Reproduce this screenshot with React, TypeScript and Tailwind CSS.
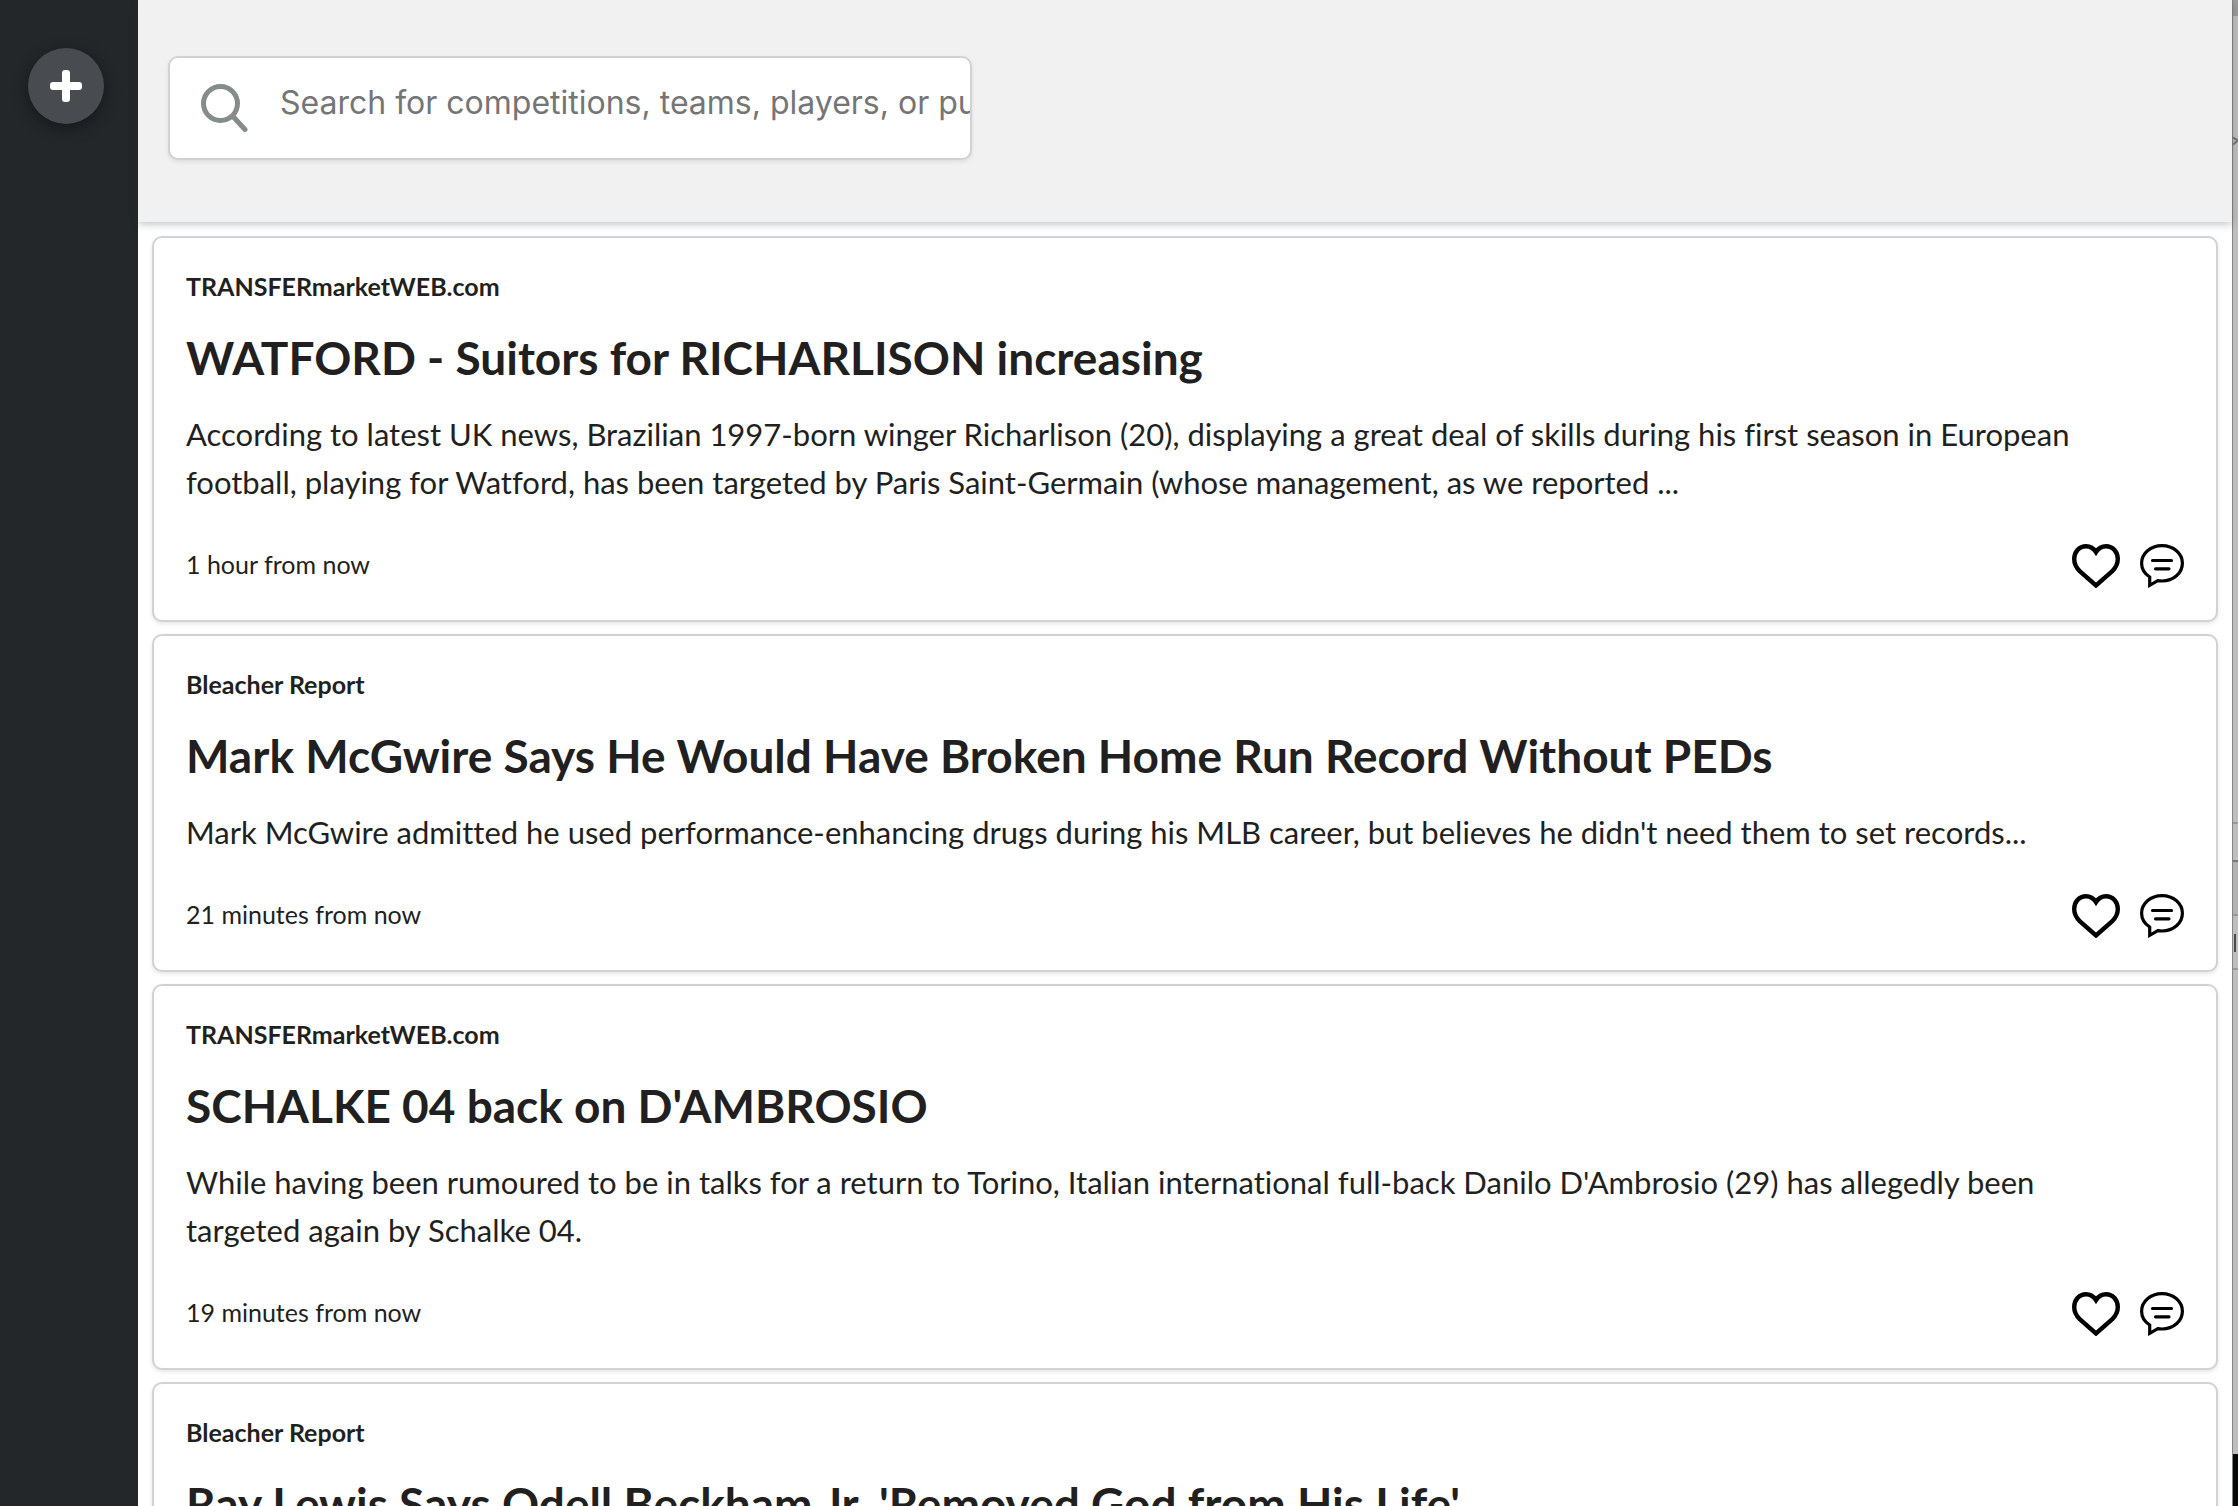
type Article = { source: string; title: string; summary: string; time: string };

const articles: Article[] = [
  {
    source: "TRANSFERmarketWEB.com",
    title: "WATFORD - Suitors for RICHARLISON increasing",
    summary:
      "According to latest UK news, Brazilian 1997-born winger Richarlison (20), displaying a great deal of skills during his first season in European football, playing for Watford, has been targeted by Paris Saint-Germain (whose management, as we reported ...",
    time: "1 hour from now",
  },
  {
    source: "Bleacher Report",
    title: "Mark McGwire Says He Would Have Broken Home Run Record Without PEDs",
    summary:
      "Mark McGwire admitted he used performance-enhancing drugs during his MLB career, but believes he didn't need them to set records...",
    time: "21 minutes from now",
  },
  {
    source: "TRANSFERmarketWEB.com",
    title: "SCHALKE 04 back on D'AMBROSIO",
    summary:
      "While having been rumoured to be in talks for a return to Torino, Italian international full-back Danilo D'Ambrosio (29) has allegedly been targeted again by Schalke 04.",
    time: "19 minutes from now",
  },
  {
    source: "Bleacher Report",
    title: "Ray Lewis Says Odell Beckham Jr. 'Removed God from His Life'",
    summary: "",
    time: "",
  },
];

function PlusIcon() {
  return (
    <svg viewBox="0 0 32 32" className="size-8" fill="#ffffff" aria-hidden="true">
      <rect x="12" y="0" width="8" height="32" rx="3" />
      <rect x="0" y="12" width="32" height="8" rx="3" />
    </svg>
  );
}

function SearchIcon() {
  return (
    <svg viewBox="0 0 48 48" className="size-12 shrink-0" fill="none" stroke="#868c8c" strokeWidth="5" strokeLinecap="round" aria-hidden="true">
      <circle cx="20.5" cy="19.5" r="17" />
      <path d="M33 32.500L45 45.500" />
    </svg>
  );
}

function HeartIcon() {
  return (
    <svg viewBox="0 0 48 44" className="h-11 w-12" fill="none" stroke="#000000" strokeWidth="4.4" aria-hidden="true">
      <path d="M24 8C21.500 4 18 2.200 14 2.200C7 2.200 2.200 8 2.200 15C2.200 20 4.500 24 8 27.500L24 41.500L40 27.500C43.500 24 45.800 20 45.800 15C45.800 8 41 2.200 34 2.200C30 2.200 26.500 4 24 8Z" />
    </svg>
  );
}

function CommentIcon() {
  return (
    <svg viewBox="0 0 44 44" className="size-11" fill="none" stroke="#000000" strokeWidth="3.2" aria-hidden="true">
      <path d="M22 1.700C33.500 1.700 42.400 9.500 42.400 19.200C42.400 29 33.500 37 22 37C20.500 37 19 36.900 17.800 36.700L9.700 41.300V33C4.800 29.800 1.600 25 1.600 19.200C1.600 9.500 10.500 1.700 22 1.700Z" />
      <path d="M12.500 16.500h19M15.500 24.800h13.500" strokeLinecap="round" />
    </svg>
  );
}

function ArticleCard({ article }: { article: Article }) {
  return (
    <article className="rounded-[10px] border-2 border-[#d2d2d2] bg-white p-8 shadow-[0_2px_4px_rgba(0,0,0,0.1)]">
      <p className="text-[25px] leading-8 font-bold">{article.source}</p>
      <h2 className="mt-[26px] text-[46px] leading-[60px] font-bold">{article.title}</h2>
      <p className="mt-[22px] pr-10 text-[31px] leading-[48px]">{article.summary}</p>
      <footer className="mt-[38px] flex items-start justify-between">
        <time className="text-[25px] leading-10">{article.time}</time>
        <div className="flex gap-5">
          <button type="button" aria-label="Like">
            <HeartIcon />
          </button>
          <button type="button" aria-label="Comment">
            <CommentIcon />
          </button>
        </div>
      </footer>
    </article>
  );
}

function WindowBehind() {
  return (
    <div className="flex w-1.5 shrink-0 flex-col overflow-hidden border-l border-[#858585] bg-[#bebebe]" aria-hidden="true">
      <div className="h-4 shrink-0 bg-[#9b9b9b]" />
      <div className="h-[806px] shrink-0 pt-[120px]">
        <svg viewBox="0 0 5 10" className="h-2.5 w-full" fill="none" stroke="#79707a" strokeWidth="2">
          <path d="M0 1.500L5 4.500L0 8.500" />
        </svg>
      </div>
      <div className="h-10 shrink-0 border-y-2 border-t-[#9a9a9a] border-b-[#777777]" />
      <div className="h-[54px] shrink-0 border-b-2 border-[#999999] bg-[#b2b2b2]" />
      <div className="h-[54px] shrink-0 border-b-2 border-[#999999] pt-[18px]">
        <div className="ml-px h-[18px] w-0.5 bg-[#4a4a4a]" />
      </div>
      <div className="h-[484px] shrink-0" />
      <div className="grow bg-[#050807]" />
    </div>
  );
}

export default function App() {
  return (
    <div className="flex h-screen overflow-hidden bg-white font-['Lato',sans-serif] text-[#221f20] [font-variant-ligatures:none]">
      <nav className="w-[138px] shrink-0 bg-[#232729] pt-12 pl-7">
        <button
          type="button"
          aria-label="Add"
          className="flex size-[76px] items-center justify-center rounded-full bg-[#484b4f] shadow-[0_4px_16px_rgba(0,0,0,0.4)]"
        >
          <PlusIcon />
        </button>
      </nav>
      <main className="min-w-0 grow">
        <header className="relative bg-[#f1f1f1] px-[30px] pt-14 pb-[62px] shadow-[0_2px_8px_rgba(40,50,55,0.3)]">
          <label className="flex h-[104px] max-w-[804px] items-start overflow-hidden rounded-[10px] border-2 border-[#d2d2d2] bg-white pl-[30px] shadow-[0_2px_4px_rgba(0,0,0,0.08)]">
            <span className="pt-[26px]">
              <SearchIcon />
            </span>
            <input
              type="text"
              aria-label="Search"
              placeholder="Search for competitions, teams, players, or publications"
              className="ml-8 h-[88px] min-w-0 grow bg-transparent font-['Inter',sans-serif] text-[32px] outline-none placeholder:text-[#757575]"
            />
          </label>
        </header>
        <section className="flex flex-col gap-3 p-3.5">
          {articles.map((a) => (
            <ArticleCard key={a.title} article={a} />
          ))}
        </section>
      </main>
      <WindowBehind />
    </div>
  );
}
